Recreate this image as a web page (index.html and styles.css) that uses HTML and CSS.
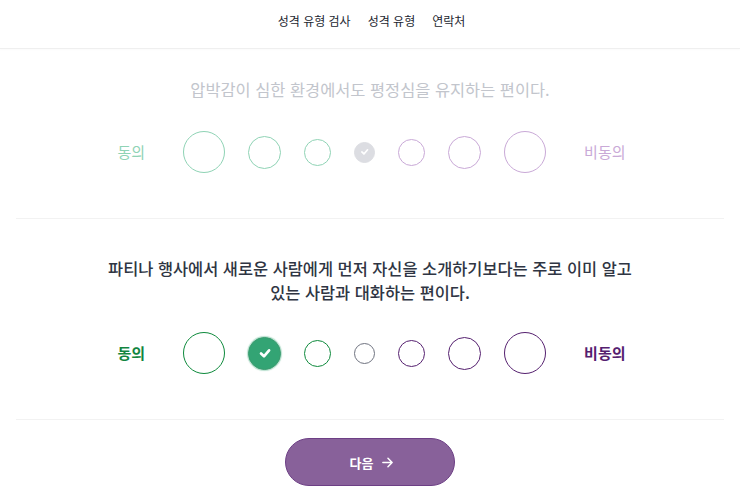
FILE: index.html
```html
<!DOCTYPE html>
<html lang="ko">
<head>
<meta charset="utf-8">
<title>성격 유형 검사</title>
<link rel="stylesheet" href="styles.css">
</head>
<body>
<header class="topbar">
  <nav class="nav">
    <a class="nav-link" href="#">성격 유형 검사</a>
    <a class="nav-link" href="#">성격 유형</a>
    <a class="nav-link" href="#">연락처</a>
  </nav>
</header>
<main class="test">
  <section class="question question-first is-inactive">
    <p class="q-text">압박감이 심한 환경에서도 평정심을 유지하는 편이다.</p>
    <div class="scale">
      <span class="label label-agree">동의</span>
      <div class="options">
        <span class="opt agree s1"></span>
        <span class="opt agree s2"></span>
        <span class="opt agree s3"></span>
        <span class="opt neutral s4 checked">
          <svg viewBox="0 0 12 12" class="check"><polyline points="3,6.3 5.2,8.4 9,4" /></svg>
        </span>
        <span class="opt disagree s3"></span>
        <span class="opt disagree s2"></span>
        <span class="opt disagree s1"></span>
      </div>
      <span class="label label-disagree">비동의</span>
    </div>
  </section>
  <section class="question is-active">
    <p class="q-text">파티나 행사에서 새로운 사람에게 먼저 자신을 소개하기보다는 주로 이미 알고 있는 사람과 대화하는 편이다.</p>
    <div class="scale">
      <span class="label label-agree">동의</span>
      <div class="options">
        <span class="opt agree s1"></span>
        <span class="opt agree s2 checked">
          <svg viewBox="0 0 12 12" class="check"><polyline points="3,6.3 5.2,8.4 9,4" /></svg>
        </span>
        <span class="opt agree s3"></span>
        <span class="opt neutral s4"></span>
        <span class="opt disagree s3"></span>
        <span class="opt disagree s2"></span>
        <span class="opt disagree s1"></span>
      </div>
      <span class="label label-disagree">비동의</span>
    </div>
  </section>
  <div class="actions">
    <button class="next-btn" type="button">다음
      <svg viewBox="0 0 14 14" class="arrow"><path d="M2 7h10M7.5 2.5L12 7l-4.5 4.5" /></svg>
    </button>
  </div>
</main>
</body>
</html>
```
FILE: styles.css
```css
* { box-sizing: border-box; }
html, body { margin: 0; padding: 0; background: #ffffff; }
body {
  font-family: "Noto Sans CJK KR", "Noto Sans", sans-serif;
  color: #343c4b;
}
.topbar {
  height: 49px;
  border-bottom: 1px solid #efefef;
  box-shadow: 0 1px 2px rgba(0,0,0,0.02);
  display: flex;
  align-items: flex-start;
  justify-content: center;
}
.nav {
  display: flex;
  gap: 17px;
  padding-top: 11px;
  padding-left: 3px;
}
.nav-link {
  font-size: 12px;
  color: #222630;
  text-decoration: none;
  line-height: 20px;
}
.test {
  padding: 0 16px;
}
.question {
  border-bottom: 1px solid #f2f2f2;
  padding: 37px 0 45px;
  display: flex;
  flex-direction: column;
  align-items: center;
}
.question-first { padding-top: 28px; }
.q-text {
  margin: 0;
  text-align: center;
  line-height: 24px;
  font-size: 16.4px;
  max-width: 532px;
}
.is-inactive .q-text { color: #c2c5cc; }
.is-active .q-text { color: #2f3543; font-weight: 500; }
.scale {
  display: flex;
  align-items: center;
  justify-content: center;
  gap: 38px;
  margin-top: 30px;
  height: 42px;
  padding-left: 3px;
}
.is-active .scale { margin-top: 28px; }
.label {
  font-size: 15px;
  font-weight: 700;
  line-height: 20px;
}
.options {
  display: flex;
  align-items: center;
  gap: 23px;
}
.opt {
  border-radius: 50%;
  border: 1.5px solid #999;
  background: #fff;
  display: flex;
  align-items: center;
  justify-content: center;
}
.s1 { width: 42px; height: 42px; }
.s2 { width: 33px; height: 33px; }
.s3 { width: 27px; height: 27px; }
.s4 { width: 21px; height: 21px; }
.check { width: 60%; height: 60%; }
.check polyline {
  fill: none;
  stroke: #fff;
  stroke-width: 1.8;
  stroke-linecap: round;
  stroke-linejoin: round;
}
.is-inactive .label-agree { color: #8fd3b5; font-weight: 400; }
.is-inactive .label-disagree { color: #c9a9d7; font-weight: 400; }
.is-inactive .opt.agree { border-color: #8fd3b5; }
.is-inactive .opt.disagree { border-color: #c9a9d7; }
.is-inactive .opt.neutral { border-color: #dcdde2; }
.is-inactive .opt.neutral.checked { background: #dcdde2; }
.is-active .label-agree { color: #13853f; }
.is-active .label-disagree { color: #55206f; }
.is-active .opt.agree { border-color: #0e8a3c; }
.is-active .opt.disagree { border-color: #55206f; }
.is-active .opt.neutral { border-color: #6f7380; }
.is-active .opt.agree.checked {
  background: #33a474;
  border-color: #3a9c6f;
  box-shadow: 0 0 1px 1px rgba(51,164,116,0.35);
}
.is-active .opt.checked .check { width: 52%; height: 52%; }
.is-active .opt.checked .check polyline { stroke-width: 2; }
.actions {
  display: flex;
  justify-content: center;
  padding-top: 18px;
}
.next-btn {
  width: 170px;
  height: 48px;
  border-radius: 24px;
  background: #88619a;
  border: 1px solid #6d3f85;
  color: #fff;
  font-family: "Noto Sans CJK KR", "Noto Sans", sans-serif;
  font-size: 13px;
  font-weight: 700;
  display: flex;
  align-items: center;
  justify-content: center;
  gap: 8px;
  padding: 0 0 0 4px;
}
.arrow { width: 13px; height: 13px; }
.arrow path {
  fill: none;
  stroke: #fff;
  stroke-width: 1.6;
  stroke-linecap: round;
  stroke-linejoin: round;
}
```
